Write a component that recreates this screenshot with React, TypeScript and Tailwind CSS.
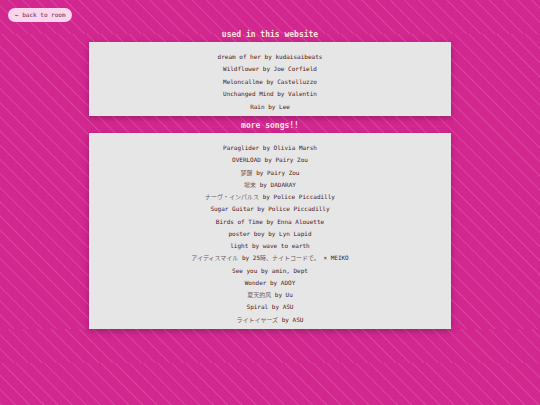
const usedSongs = [
  "dream of her by kudaisaibeats",
  "Wildflower by Joe Corfield",
  "Meloncallme by Castelluzzo",
  "Unchanged Mind by Valentin",
  "Rain by Lee",
];

const moreSongs = [
  "Paraglider by Olivia Marsh",
  "OVERLOAD by Pairy Zou",
  "梦醒 by Pairy Zou",
  "場末 by DADARAY",
  "ナーヴ・インパルス by Police Piccadilly",
  "Sugar Guitar by Police Piccadilly",
  "Birds of Time by Enna Alouette",
  "poster boy by Lyn Lapid",
  "light by wave to earth",
  "アイディスマイル by 25時、ナイトコードで。 × MEIKO",
  "See you by amin, Dept",
  "Wonder by ADOY",
  "夏天的风 by Uu",
  "Spiral by ASU",
  "ライトイヤーズ by ASU",
];

const stripes =
  "bg-[repeating-linear-gradient(45deg,#dc459e_0px,#d1278f_1px,#d1278f_9px,#dc459e_10px)]";

function StripedBackground() {
  return (
    <div aria-hidden="true" className="absolute inset-0 -z-10 flex flex-col overflow-hidden">
      <div className={`h-[34px] shrink-0 ${stripes}`} />
      <div className={`h-[295px] shrink-0 ${stripes}`} />
      <div className={`h-[34px] shrink-0 ${stripes}`} />
      <div className={`h-[295px] shrink-0 ${stripes}`} />
    </div>
  );
}

// Japanese and Chinese runs are set lighter than the latin text
function SongName({ name }: { name: string }) {
  return name.split(/([\u3000-\u9fff]+)/).map((part, i) =>
    i % 2 === 1 ? (
      <span key={i} className="font-['Noto_Sans_CJK_JP',sans-serif] text-[#745a5a]">
        {part}
      </span>
    ) : (
      part
    )
  );
}

function SongList({ title, songs, className }: { title: string; songs: string[]; className: string }) {
  return (
    <section className="w-full">
      <h2 className="pt-[2px] text-center text-[8px] leading-[15px] font-bold text-[#ffe4dc]">{title}</h2>
      <ul
        className={`mx-auto grid w-[67.2%] bg-[#e6e6e6] pt-[9px] pb-[3px] text-center text-[6px] leading-3 text-[#4a2020] shadow-[0_2px_6px_rgba(0,0,0,0.25)] ${className}`}
      >
        {songs.map(song => (
          <li key={song}>
            <SongName name={song} />
          </li>
        ))}
      </ul>
    </section>
  );
}

export default function App() {
  return (
    <div className="relative isolate min-h-screen bg-[#d1278f] font-['DejaVu_Sans_Mono','Noto_Sans_CJK_JP',monospace]">
      <StripedBackground />
      <nav className="flex h-[25px] items-start px-2 pt-2">
        <a
          href="#room"
          className="relative z-10 rounded-full bg-[#fbd5ec] pr-1.5 pl-[7px] text-[6px] leading-[14px] text-[#5a3058]"
        >
          ← back to room
        </a>
      </nav>
      <main className="flex flex-col">
        <SongList title="used in this website" songs={usedSongs} className="min-h-[74px]" />
        <SongList title="more songs!!" songs={moreSongs} className="min-h-[196px]" />
      </main>
    </div>
  );
}
